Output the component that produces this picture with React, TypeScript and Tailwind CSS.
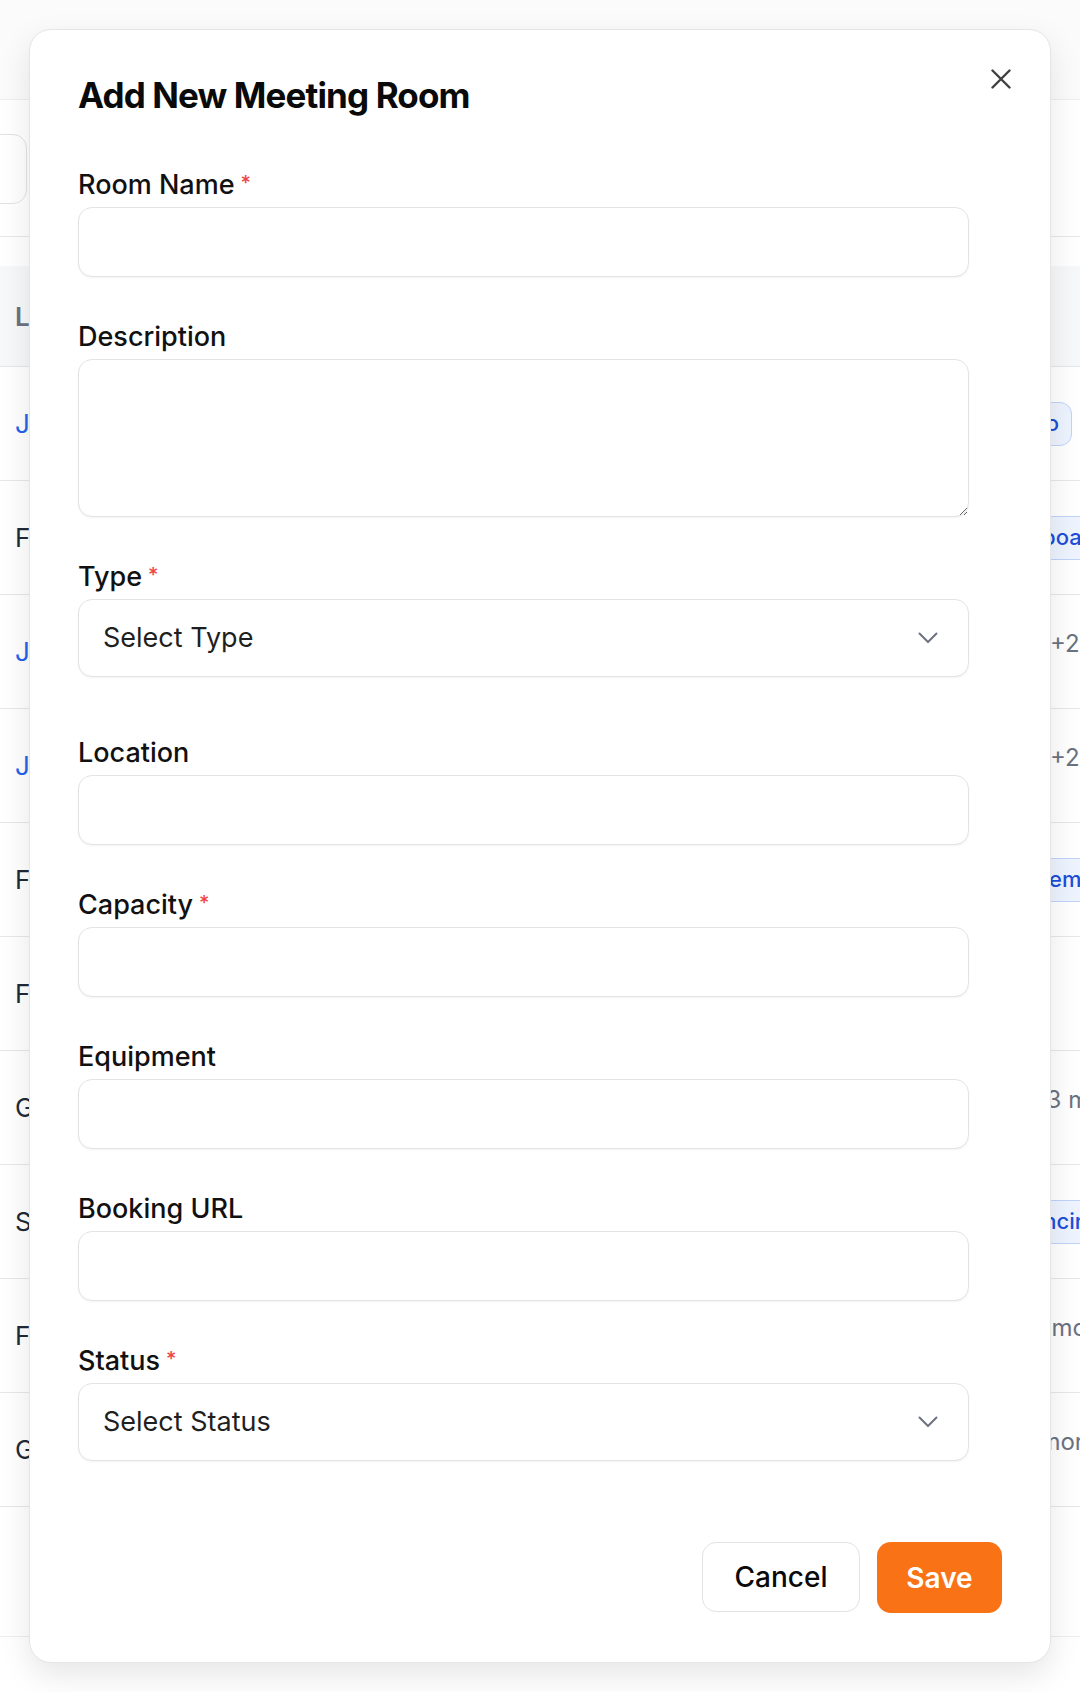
import React from "react";

type Row = {
  name: string;
  link: boolean;
  right: React.ReactNode;
};

const badge =
  "inline-flex items-center h-[44px] px-[12px] rounded-[12px] border-[1.5px] border-[#bfd3fb] bg-[#eef4ff] text-[#1d4ed8] text-[22px] font-medium whitespace-nowrap";

const more = "mb-[16px] text-[24px] text-[#6b7280] whitespace-nowrap";

const rows: Row[] = [
  { name: "Jupiter Room", link: true, right: <span className={`${badge} ml-[45px]`}>Video</span> },
  { name: "Focus Pod", link: false, right: <span className={`${badge} ml-[28px]`}>Whiteboard</span> },
  { name: "Juno Hall", link: true, right: <span className={`${more} ml-[110px]`}>+2</span> },
  { name: "Jasmine", link: true, right: <span className={`${more} ml-[110px]`}>+2</span> },
  { name: "Falcon", link: false, right: <span className={`${badge} ml-[50px]`}>System</span> },
  { name: "Fern", link: false, right: null },
  { name: "Garden", link: false, right: <span className={`${more} ml-[91px]`}>+3 more</span> },
  { name: "Summit", link: false, right: <span className={`${badge} ml-[6px]`}>Conferencing</span> },
  { name: "Forest", link: false, right: <span className={`${more} ml-[75px]`}>+2 more</span> },
  { name: "Galaxy", link: false, right: <span className={`${more} ml-[67px]`}>+1 more</span> },
];

function Chevron() {
  return (
    <svg width="20" height="12" viewBox="0 0 20 12" fill="none">
      <polyline points="1.5,1.5 10,10 18.5,1.5" stroke="#6b7280" strokeWidth="2" strokeLinecap="round" strokeLinejoin="round" />
    </svg>
  );
}

function Label({ text, required }: { text: string; required?: boolean }) {
  return (
    <label className="block h-[35px] text-[27px] font-medium leading-[35px] text-[#111111] mb-[5px]">
      {text}
      {required && (
        <span className="relative -top-[4px] ml-[6px] text-[20px] leading-none text-[#ef4444]">*</span>
      )}
    </label>
  );
}

const inputCls =
  "block w-full h-[70px] rounded-[14px] border-[1.5px] border-[#e3e3e3] bg-white px-[26px] text-[26px] shadow-[0_1px_2px_rgba(0,0,0,0.05)] outline-none";

function SelectBox({ placeholder }: { placeholder: string }) {
  return (
    <div className="flex items-center justify-between w-full h-[78px] rounded-[14px] border-[1.5px] border-[#e3e3e3] bg-white pl-[24px] pr-[30px] shadow-[0_1px_2px_rgba(0,0,0,0.05)]">
      <span className="text-[27px] text-[#1f1f1f]">{placeholder}</span>
      <Chevron />
    </div>
  );
}

export default function App() {
  return (
    <div className="relative w-[1080px] h-[1692px] overflow-hidden bg-white font-['Inter',sans-serif]">
      {/* page behind the dialog */}
      <div className="h-[100px] bg-[#fbfbfb] border-b border-[#eeeeee]" />
      <div className="h-[137px] border-b border-[#e8e8e8] pt-[34px]">
        <div className="ml-[-300px] w-[327px] h-[70px] rounded-[14px] border-[1.5px] border-[#e3e3e3] bg-white" />
      </div>
      <div className="h-[29px]" />
      <div className="flex items-center h-[101px] bg-[#f7f8fa] border-b border-[#e5e7eb] px-[15px]">
        <span className="text-[26px] font-semibold text-[#6b7280]">Location</span>
      </div>
      {rows.map((r) => (
        <div key={r.name} className="flex items-center h-[114px] border-b border-[#e5e7eb]">
          <span className={`pl-[15px] flex-1 text-[26px] ${r.link ? "text-[#2563eb]" : "text-[#1f2937]"}`}>{r.name}</span>
          <div className="w-[140px] shrink-0 flex items-center">{r.right}</div>
        </div>
      ))}
      <div className="h-[130px] border-b border-[#eeeeee]" />

      {/* dialog */}
      <div className="absolute left-[29px] top-[29px] w-[1022px] rounded-[22px] border-[1.5px] border-[#e5e5e5] bg-white pl-[48px] pr-[48px] pt-[43px] pb-[49px] shadow-[0_12px_32px_rgba(0,0,0,0.10)]">
        <button className="absolute top-[39px] right-[39px] w-[20px] h-[20px]">
          <svg width="20" height="20" viewBox="0 0 20 20" fill="none">
            <path d="M1.5 1.5L18.5 18.5M18.5 1.5L1.5 18.5" stroke="#404040" strokeWidth="2.4" strokeLinecap="round" />
          </svg>
        </button>
        <h2 className="text-[35px] leading-[45px] font-bold tracking-[-0.025em] text-[#0a0a0a] mb-[49px]">
          Add New Meeting Room
        </h2>

        <div className="pr-[33px] flex flex-col gap-[42px]">
          <div>
            <Label text="Room Name" required />
            <input className={inputCls} />
          </div>
          <div>
            <Label text="Description" />
            <textarea className="block w-full h-[158px] rounded-[14px] border-[1.5px] border-[#e3e3e3] bg-white px-[26px] py-[16px] text-[26px] shadow-[0_1px_2px_rgba(0,0,0,0.05)] outline-none" />
          </div>
          <div className="mb-[16px]">
            <Label text="Type" required />
            <SelectBox placeholder="Select Type" />
          </div>
          <div>
            <Label text="Location" />
            <input className={inputCls} />
          </div>
          <div>
            <Label text="Capacity" required />
            <input className={inputCls} />
          </div>
          <div>
            <Label text="Equipment" />
            <input className={inputCls} />
          </div>
          <div>
            <Label text="Booking URL" />
            <input className={inputCls} />
          </div>
          <div>
            <Label text="Status" required />
            <SelectBox placeholder="Select Status" />
          </div>
        </div>

        <div className="flex justify-end gap-[17px] mt-[81px]">
          <button className="w-[158px] h-[70px] rounded-[14px] border-[1.5px] border-[#e3e3e3] bg-white text-[28px] font-medium text-[#0a0a0a]">
            Cancel
          </button>
          <button className="w-[125px] h-[71px] rounded-[14px] bg-[#f97316] text-[28px] font-semibold text-white">
            Save
          </button>
        </div>
      </div>
    </div>
  );
}
